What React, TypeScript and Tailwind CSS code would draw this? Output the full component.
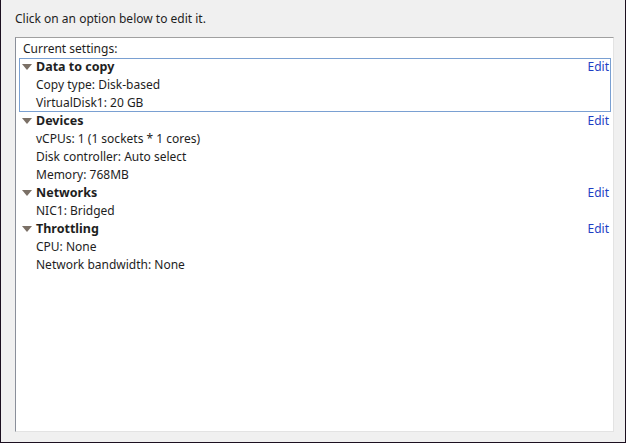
import React from 'react';

const groups = [
  { title: 'Data to copy', items: ['Copy type: Disk-based', 'VirtualDisk1: 20 GB'], selected: true },
  { title: 'Devices', items: ['vCPUs: 1 (1 sockets * 1 cores)', 'Disk controller: Auto select', 'Memory: 768MB'] },
  { title: 'Networks', items: ['NIC1: Bridged'] },
  { title: 'Throttling', items: ['CPU: None', 'Network bandwidth: None'] },
];

const Caret = () => (
  <svg width="10" height="6" viewBox="0 0 10 6" className="shrink-0">
    <path d="M0 0 L10 0 L5 6 Z" fill="#7b7066" />
  </svg>
);

const App = () => {
  return (
    <div
      className="w-[626px] h-[443px] bg-[#f0f0f0] border-x border-b border-[#1c1020] flex flex-col text-[12px] text-[#1e1e1e]"
      style={{ fontFamily: '"Noto Sans", "Liberation Sans", sans-serif' }}
    >
      <div className="pl-[14px] pt-[11px] h-[16px] leading-[16px] box-content">Click on an option below to edit it.</div>

      <div className="mt-[10px] ml-[14px] mr-[11px] mb-[10px] flex-1 pt-[2px] bg-white border border-t-[#a0a0a0] border-l-[#8a8f9a] border-r-[#e3e3e3] border-b-[#e3e3e3]">
        <div className="h-[18px] leading-[18px] pl-[7px]">Current settings:</div>

        {groups.map((g) => (
          <div
            key={g.title}
            className={
              g.selected
                ? 'ml-[3px] mr-[2px] ring-1 ring-inset ring-[#7aa0d2]'
                : 'ml-[3px] mr-[2px]'
            }
          >
            <div className="h-[18px] flex items-center">
              <div className="w-[17px] pl-[3px]">
                <Caret />
              </div>
              <span className="font-bold text-[12.5px]">{g.title}</span>
              <span className="ml-auto mr-[2px] text-[#1e3fc4]">Edit</span>
            </div>
            {g.items.map((it) => (
              <div key={it} className="h-[18px] leading-[18px] pl-[17px]">
                {it}
              </div>
            ))}
          </div>
        ))}
      </div>
    </div>
  );
};

export default App;
